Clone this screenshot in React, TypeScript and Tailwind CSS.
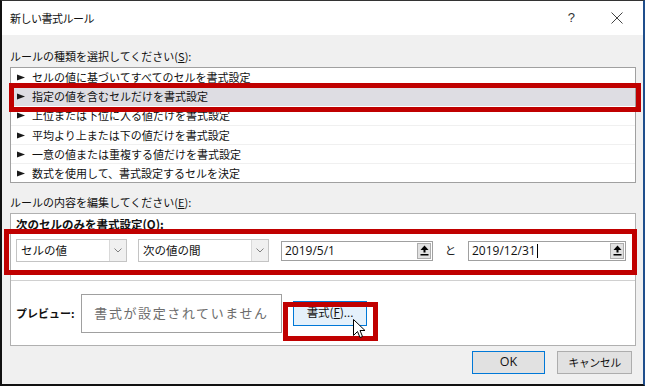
import React from "react";

const font = { fontFamily: '"Noto Sans CJK JP", "Noto Sans", sans-serif' };
const latin = { fontFamily: '"Open Sans", "Noto Sans CJK JP", sans-serif' };

function Tri() {
  return (
    <svg width="8" height="7" viewBox="0 0 8 7" className="shrink-0">
      <polygon points="0,0.5 8,3.5 0,6.5" fill="#1a1a1a" />
    </svg>
  );
}

function Chevron() {
  return (
    <svg width="8" height="5" viewBox="0 0 8 5">
      <polyline points="0.5,0.5 4,4 7.5,0.5" fill="none" stroke="#808080" strokeWidth="1" />
    </svg>
  );
}

function RefBtn() {
  return (
    <div className="w-[14px] h-[16px] bg-[#e1e1e1] border border-[#adadad] flex items-center justify-center">
      <svg width="9" height="11" viewBox="0 0 9 11">
        <polygon points="4.5,0.5 8.5,5 0.5,5" fill="#000" />
        <rect x="3.5" y="4.5" width="2" height="3" fill="#000" />
        <rect x="0.5" y="9" width="8" height="1.5" fill="#000" />
      </svg>
    </div>
  );
}

function Combo({ w, text }: { w: string; text: string }) {
  return (
    <div className={`${w} h-[23px] bg-white border border-[#c4c4c4] flex items-stretch`}>
      <div className="flex-1 pl-[4px] flex items-center text-[11.5px] text-[#111]">{text}</div>
      <div className="w-[17px] bg-[#f0f0f0] border-l border-[#d9d9d9] flex items-center justify-center">
        <Chevron />
      </div>
    </div>
  );
}

function TextInput({ w, text, caret }: { w: string; text: string; caret?: boolean }) {
  return (
    <div className={`${w} h-[20px] bg-white border border-[#a0a0a0] flex items-center pr-[1px]`}>
      <div className="flex-1 pl-[3px] flex items-center text-[12px] text-[#111]" style={latin}>
        {text}
        {caret && <span className="inline-block w-px h-[14px] bg-black ml-[1px]" />}
      </div>
      <RefBtn />
    </div>
  );
}

const rules = [
  "セルの値に基づいてすべてのセルを書式設定",
  "指定の値を含むセルだけを書式設定",
  "上位または下位に入る値だけを書式設定",
  "平均より上または下の値だけを書式設定",
  "一意の値または重複する値だけを書式設定",
  "数式を使用して、書式設定するセルを決定",
];

export default function App() {
  return (
    <div className="relative w-[648px] h-[386px] bg-white overflow-hidden" style={font}>
      <div className="w-[645px] h-[386px] flex flex-col border-l-2 border-t border-b-2 border-r-2 border-l-[#111] border-t-[#333] border-b-[#111] border-r-[#1f4e8c]">
        {/* Title bar */}
        <div className="h-[34px] bg-white flex items-center pl-[8px] pr-[20px] text-[11px] text-[#111] shrink-0">
          <span className="flex-1 tracking-[-0.5px]">新しい書式ルール</span>
          <span className="text-[13px] text-[#333] mr-[36px]" style={{ fontFamily: '"Liberation Sans", sans-serif' }}>?</span>
          <svg width="12" height="12" viewBox="0 0 12 12">
            <line x1="0.5" y1="0.5" x2="11.5" y2="11.5" stroke="#444" strokeWidth="1" />
            <line x1="11.5" y1="0.5" x2="0.5" y2="11.5" stroke="#444" strokeWidth="1" />
          </svg>
        </div>

        {/* Body */}
        <div className="flex-1 bg-[#f0f0f0] pl-[8px] pr-[7px] flex flex-col">
          <div className="mt-[13px] h-[16px] flex items-center text-[11px] text-[#111]">
            ルールの種類を選択してください(<span className="underline">S</span>):
          </div>

          <div className="mt-[3px] h-[116px] bg-white border border-[#a0a0a0] flex flex-col">
            {rules.map((r, i) => (
              <div
                key={r}
                className={`h-[19px] shrink-0 flex items-center gap-[7px] pl-[6px] text-[11px] text-[#111] ${
                  i === 1 ? "bg-[#dedde3]" : ""
                } ${i >= 3 ? "border-t border-[#f0f0f0]" : ""}`}
              >
                <Tri />
                <span>{r}</span>
              </div>
            ))}
          </div>

          <div className="mt-[11px] h-[16px] flex items-center text-[11px] text-[#111]">
            ルールの内容を編集してください(<span className="underline">E</span>):
          </div>

          <div className="mt-[3px] h-[133px] bg-white border border-[#b0b0b0] flex flex-col">
            <div className="h-[67px] border-b border-[#d0d0d0] flex flex-col pl-[5px]">
              <div className="mt-[3px] h-[16px] flex items-center text-[11.5px] font-bold text-[#111]">
                次のセルのみを書式設定(<span className="underline">O</span>):
              </div>
              <div className="mt-[6px] flex items-center">
                <Combo w="w-[111px]" text="セルの値" />
                <div className="w-[11px]" />
                <Combo w="w-[131px]" text="次の値の間" />
                <div className="w-[12px]" />
                <TextInput w="w-[152px]" text="2019/5/1" />
                <div className="w-[35px] text-center text-[11.5px] text-[#222]">と</div>
                <TextInput w="w-[158px]" text="2019/12/31" caret />
              </div>
            </div>
            <div className="flex-1 flex items-center pl-[5px]">
              <div className="w-[65px] text-[11px] font-bold text-[#111]">プレビュー:</div>
              <div className="w-[201px] h-[39px] border border-[#a0a0a0] bg-white flex items-center justify-center text-[13px] tracking-[1.6px] text-[#6d6d6d]">
                書式が設定されていません
              </div>
              <div className="w-[11px]" />
              <div className="w-[74px] h-[25px] bg-[#e5f1fb] border border-[#0078d7] flex items-center justify-center text-[11.5px] text-[#111]">
                書式(<span className="underline">F</span>)...
              </div>
            </div>
          </div>

          <div className="mt-[5px] flex justify-end pr-[4px] gap-[12px]">
            <div className="w-[73px] h-[23px] bg-[#e1e1e1] border border-[#0078d7] flex items-center justify-center text-[12.5px] text-[#111]" style={latin}>
              OK
            </div>
            <div className="w-[75px] h-[23px] bg-[#e1e1e1] border border-[#adadad] flex items-center justify-center text-[11px] tracking-[-0.5px] text-[#111]">
              キャンセル
            </div>
          </div>
        </div>
      </div>

      {/* Red annotation boxes */}
      <div className="absolute left-[9px] top-[83px] w-[632px] h-[29px] border-[5px] border-[#c00000]" />
      <div className="absolute left-[4px] top-[229px] w-[633px] h-[46px] border-[5px] border-[#c00000]" />
      <div className="absolute left-[283px] top-[302px] w-[95px] h-[39px] border-[5px] border-[#c00000]" />

      {/* Mouse cursor */}
      <svg className="absolute left-[353px] top-[319px]" width="13" height="21" viewBox="0 0 13 21">
        <polygon
          points="0.5,0.5 0.5,16.5 4.5,12.5 7,18.5 9.5,17.5 7,11.5 12,11.5"
          fill="#fff"
          stroke="#000"
          strokeWidth="1"
          strokeLinejoin="round"
        />
      </svg>
    </div>
  );
}
